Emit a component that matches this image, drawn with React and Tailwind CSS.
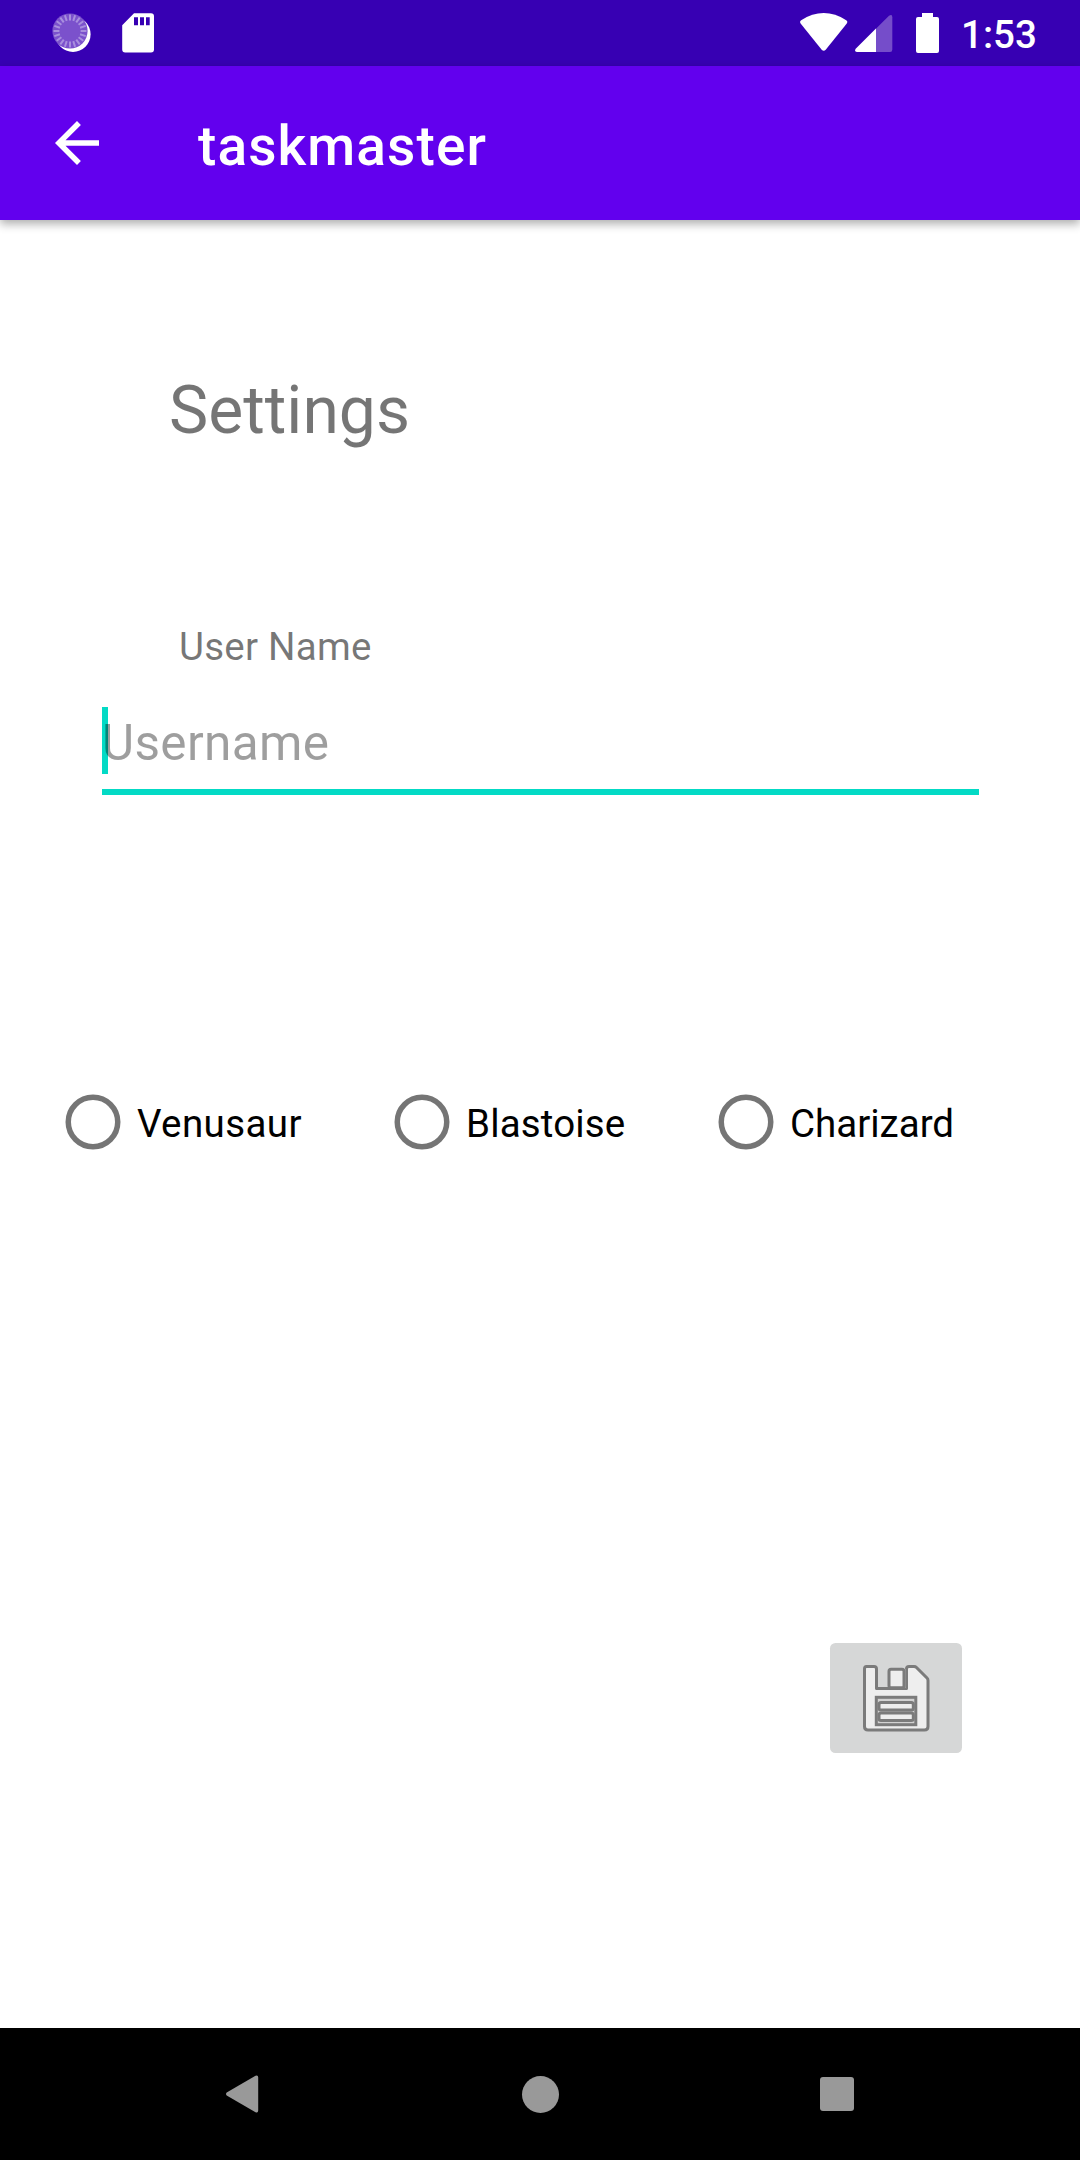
const choices = [
  { name: "Venusaur", place: "w-[329px]", tracking: "tracking-[0.4px]" },
  { name: "Blastoise", place: "w-[324px]", tracking: "tracking-[0.15px]" },
  { name: "Charizard", place: "w-[260px]", tracking: "tracking-normal" },
];

const ticks = Array.from({ length: 20 }, (_, i) => i * 18);

function StatusBar() {
  return (
    <header className="flex h-[66px] items-start bg-[#3700b3] text-white">
      <svg className="ml-[50px] mt-[11px] size-[44px]" viewBox="0 0 44 44">
        <circle cx="23" cy="23.3" r="17.6" fill="#fff" />
        <circle cx="20" cy="20" r="17.6" fill="#7b51cc" />
        <g stroke="#a98fde" strokeWidth="2">
          {ticks.map((a) => (
            <line key={a} x1="20" y1="3.5" x2="20" y2="9.4" transform={`rotate(${a} 20 20)`} />
          ))}
        </g>
      </svg>
      <svg className="ml-[26px] mt-[11px] h-[44px] w-[40px]" viewBox="0 0 40 44">
        <path
          fill="#fff"
          fillRule="evenodd"
          d="M14 2.3H31a3 3 0 0 1 3 3V38.5a3 3 0 0 1-3 3H5.200a3 3 0 0 1-3-3V14.200ZM14 6.300V14.300H18V6.300ZM20 6.300V14.300H24V6.300ZM26 6.300V14.300H29.700V6.300Z"
        />
      </svg>
      <svg className="ml-auto h-[66px] w-[160px]" viewBox="0 0 160 66">
        <path
          fill="#fff"
          d="M0.800 23.700Q-.8 21.700 1.200 20.200C16 10.500 31.500 10.500 46.200 20.200Q48.200 21.700 46.600 23.700L25.700 49.800Q23.700 51.800 21.700 49.800Z"
        />
        <path
          fill="#754dca"
          d="M56 48.500 89 15.700Q92.300 13.500 92.300 17.200V49.800Q92.300 52 90 52H57Q53.800 51.500 56 48.500Z"
        />
        <path fill="#fff" d="M56 48.500 76 28.500V52H57Q53.800 51.500 56 48.500Z" />
        <path
          fill="#fff"
          d="M122 13H133V17H137Q139 17 139 19V51Q139 53 137 53H118Q116 53 116 51V19Q116 17 118 17H122Z"
        />
      </svg>
      <div className="ml-px mt-[12px] w-[119px] text-[38.5px] font-medium leading-[46px]">1:53</div>
    </header>
  );
}

function AppBar() {
  return (
    <div className="flex h-[154px] items-center bg-[#6200ee] text-white shadow-[0_4px_9px_rgba(0,0,0,0.32)]">
      <svg className="ml-[44px] size-[66px]" viewBox="0 0 24 24" fill="#fff">
        <path d="M20 11H7.830l5.590-5.590L12 4l-8 8 8 8 1.410-1.410L7.830 13H20v-2z" />
      </svg>
      <h1 className="ml-[88px] mt-[6px] text-[55px] font-medium leading-[66px] tracking-[1.1px]">
        taskmaster
      </h1>
    </div>
  );
}

function SaveIcon() {
  return (
    <svg className="ml-[2px] mt-[2px] size-[70px]" viewBox="0 0 70 70" stroke="#7b7b7b" strokeWidth="3">
      <path
        fill="#eee"
        strokeLinejoin="round"
        d="M4.500 2.500H12Q14.500 2.500 14.500 5V24.500H44.500V5Q44.500 2.500 47 2.500H52Q53.500 2.500 54.500 3.500L65 14Q66 15 66 16.500V62.500Q66 66 62.500 66H6Q2.500 66 2.500 62.500V5Q2.500 2.500 4.500 2.500Z"
      />
      <rect x="38" y="5" width="5.500" height="19" fill="#b9b9b9" stroke="none" />
      <rect x="27" y="5.300" width="15" height="18.500" rx="2" fill="#eee" />
      <rect x="14.300" y="33.300" width="39.500" height="27.400" fill="#d2d2d2" />
      <rect x="17" y="38.500" width="34.300" height="7.600" rx="2" fill="#eee" />
      <rect x="17" y="49" width="34.300" height="7.600" rx="2" fill="#eee" />
    </svg>
  );
}

function NavBar() {
  return (
    <nav className="flex h-[132px] items-center justify-between bg-black pl-[226px] pr-[226px]">
      <svg className="h-[40px] w-[34px]" viewBox="1 0 34 40" fill="#999">
        <path d="M30.500 1.800Q33.200.700 33.200 3.500V36.500Q33.200 39.300 30.500 38.200L1.700 21.500Q.3 20 1.700 18.500Z" />
      </svg>
      <div className="size-[37px] rounded-full bg-[#999]" />
      <div className="size-[34px] rounded-[3px] bg-[#999]" />
    </nav>
  );
}

export default function App() {
  return (
    <div className="flex h-[2160px] w-[1080px] flex-col overflow-hidden bg-white font-['Roboto',sans-serif]">
      <StatusBar />
      <AppBar />
      <main className="flex grow flex-col">
        <h2 className="ml-[169px] mt-[152px] text-[66px] leading-[78px] text-black/54">Settings</h2>
        <label className="ml-[179px] mt-[174px] text-[38.5px] leading-[46px] tracking-[0.25px] text-black/54">
          User Name
        </label>
        <div className="ml-[102px] mt-[37px] flex h-[88px] w-[877px] items-start border-b-[6px] border-[#03dac5]">
          <div className="-mr-[6px] h-[67px] w-[6px] bg-[#03dac5]" />
          <span className="mt-[6px] text-[49.5px] leading-[60px] tracking-[0.35px] text-black/38">
            Username
          </span>
        </div>
        <div className="ml-[65px] mt-[298px] flex h-[57px]">
          {choices.map((c) => (
            <label key={c.name} className={`flex items-center ${c.place}`}>
              <svg className="size-[56px]" viewBox="0 0 56 56" fill="none">
                <circle cx="28" cy="28" r="24.75" stroke="#757575" strokeWidth="5.5" />
              </svg>
              <span
                className={`ml-[16px] mt-[4px] text-[38.5px] leading-[46px] text-black ${c.tracking}`}
              >
                {c.name}
              </span>
            </label>
          ))}
        </div>
        <button className="ml-[830px] mt-[493px] flex h-[110px] w-[132px] items-center justify-center rounded-[5.5px] bg-[#d6d7d7]">
          <SaveIcon />
        </button>
      </main>
      <NavBar />
    </div>
  );
}
